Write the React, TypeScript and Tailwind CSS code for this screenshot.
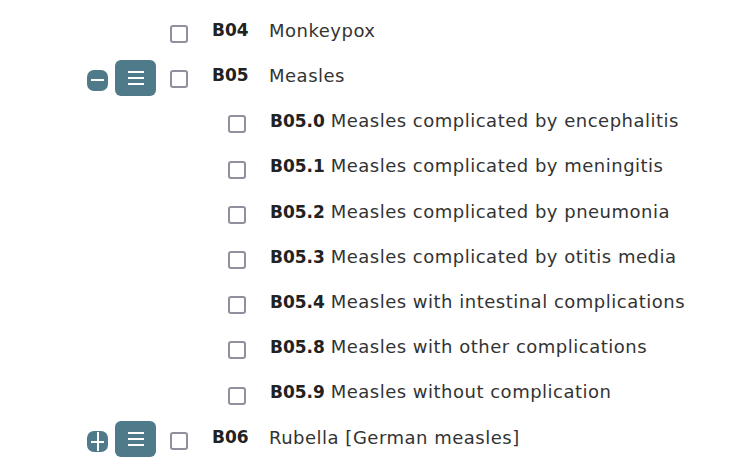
import React from 'react'

type Child = { code: string; name: string }

const measles: Child[] = [
  { code: 'B05.0', name: 'Measles complicated by encephalitis' },
  { code: 'B05.1', name: 'Measles complicated by meningitis' },
  { code: 'B05.2', name: 'Measles complicated by pneumonia' },
  { code: 'B05.3', name: 'Measles complicated by otitis media' },
  { code: 'B05.4', name: 'Measles with intestinal complications' },
  { code: 'B05.8', name: 'Measles with other complications' },
  { code: 'B05.9', name: 'Measles without complication' },
]

function Checkbox() {
  return <span className="block mt-[7px] w-[18px] h-[18px] rounded-[3px] border-2 border-[#8f8f9d] bg-white" />
}

function ToggleButton({ open }: { open: boolean }) {
  return (
    <span className="relative flex items-center justify-center mt-[9px] w-[21px] h-[21px] rounded-[7px] bg-[#4e7a8a]">
      <span className="absolute w-[13px] h-[2px] bg-white" />
      {!open && <span className="absolute w-[2px] h-[19px] bg-white" />}
    </span>
  )
}

function MenuButton() {
  return (
    <span className="flex flex-col items-center justify-center gap-[4px] mt-[4px] w-[41px] h-[36px] rounded-[6px] bg-[#4e7a8a]">
      <span className="block w-[16px] h-[2px] bg-white" />
      <span className="block w-[16px] h-[2px] bg-white" />
      <span className="block w-[16px] h-[2px] bg-white" />
    </span>
  )
}

function TopRow({ code, name, toggle }: { code: string; name: string; toggle?: 'open' | 'closed' }) {
  return (
    <div className="flex items-center h-[45.2px]">
      <div className="w-[87px]" />
      <div className="w-[28px]">{toggle && <ToggleButton open={toggle === 'open'} />}</div>
      <div className="w-[55px]">{toggle && <MenuButton />}</div>
      <Checkbox />
      <span className="ml-[24px] w-[57px] font-bold text-[17px] text-[#222]">{code}</span>
      <span className="tracking-[0.5px]">{name}</span>
    </div>
  )
}

function SubRow({ code, name }: Child) {
  return (
    <div className="flex items-center h-[45.2px] pl-[228px]">
      <Checkbox />
      <span className="ml-[24px]">
        <b className="font-bold text-[17px] text-[#222]">{code}</b>{' '}
        <span className="tracking-[0.5px]">{name}</span>
      </span>
    </div>
  )
}

export default function App() {
  return (
    <div
      className="w-[733px] h-[462px] overflow-hidden bg-white text-[#333] text-[18px] pt-[8px]"
      style={{ fontFamily: '"DejaVu Sans", Verdana, sans-serif' }}
    >
      <TopRow code="B04" name="Monkeypox" />
      <TopRow code="B05" name="Measles" toggle="open" />
      {measles.map((c) => (
        <SubRow key={c.code} {...c} />
      ))}
      <TopRow code="B06" name="Rubella [German measles]" toggle="closed" />
    </div>
  )
}
